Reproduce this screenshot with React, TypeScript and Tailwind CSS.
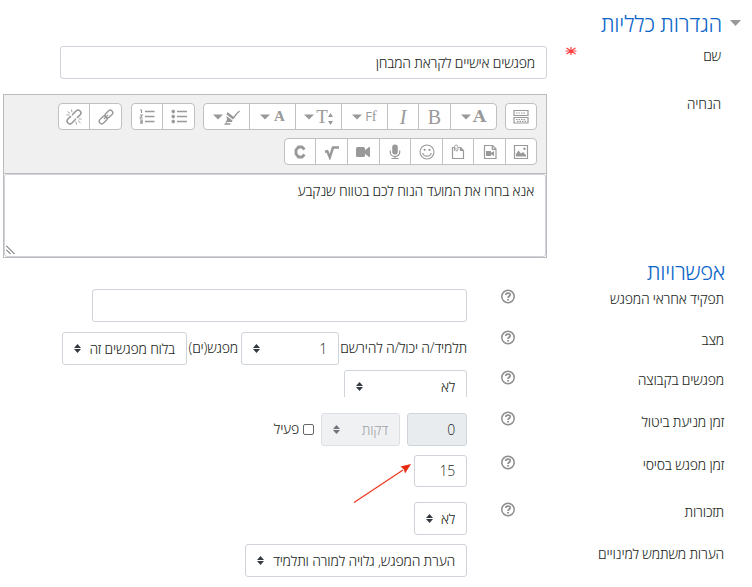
import type { ReactNode } from "react";

const Caret = () => (
  <svg width="10" height="6" viewBox="0 0 10 6" className="shrink-0">
    <path d="M0 0.5h10L5 5.5z" fill="#999" />
  </svg>
);

const Help = () => (
  <svg width="14" height="15" viewBox="0 0 14 15" fill="none" className="shrink-0">
    <circle cx="7" cy="7.5" r="6.200" stroke="#8e8e8e" strokeWidth="1.500" />
    <path d="M4.800 6C4.800 3.300 9.300 3.500 9.200 5.900 9.100 7.300 7.100 7.200 7.100 8.900" stroke="#8e8e8e" strokeWidth="1.700" />
    <path d="M6.200 10h1.800v1.600H6.200z" fill="#8e8e8e" />
  </svg>
);

const Icon = ({ children }: { children: ReactNode }) => (
  <svg width="16" height="16" viewBox="0 0 16 16" fill="none" stroke="#999" strokeWidth="1.2" className="shrink-0">
    {children}
  </svg>
);

const Group = ({ children }: { children: ReactNode }) => (
  <div className="flex h-[27px] overflow-hidden rounded-[4px] border border-[#c0c0c0] bg-white">{children}</div>
);

const Btn = ({ w, last, children }: { w: string; last?: boolean; children: ReactNode }) => (
  <div
    dir="ltr"
    className={`flex items-center justify-center tracking-normal text-[#999] ${w} ${last ? "" : "border-l border-[#c0c0c0]"}`}
  >
    {children}
  </div>
);

const Serif = ({ className, children }: { className: string; children: ReactNode }) => (
  <span className={`font-['Liberation_Serif',serif] leading-none ${className}`}>{children}</span>
);

const Updown = ({ color = "#343a40" }: { color?: string }) => (
  <svg width="7" height="9" viewBox="0 0 7 9" className="shrink-0">
    <path d="M3.5 0L7 3.9H0zM0 5.1h7L3.5 9z" fill={color} />
  </svg>
);

type SelectProps = { className: string; disabled?: boolean; children: ReactNode };

const Select = ({ className, disabled, children }: SelectProps) => (
  <div
    className={`flex h-[33px] shrink-0 items-center justify-between rounded-[3px] border border-[#ced4da] pr-[11px] pl-[11px] ${disabled ? "bg-[#e9ecef] text-[#7a8086] opacity-70" : "bg-white"} ${className}`}
  >
    <span>{children}</span>
    <Updown />
  </div>
);

type RowProps = {
  label: string;
  height: string;
  labelPad: string;
  helpPad?: string;
  children: ReactNode;
};

const Row = ({ label, height, labelPad, helpPad, children }: RowProps) => (
  <div className={`flex items-start pr-[28px] ${height}`}>
    <div className={`w-[209px] shrink-0 leading-[20px] ${labelPad}`}>{label}</div>
    <div className={`flex w-[48px] shrink-0 ${helpPad ?? ""}`}>{helpPad !== undefined && <Help />}</div>
    <div className="flex min-w-0 flex-1 items-start">{children}</div>
  </div>
);

const Toolbar = () => (
  <div className="flex h-[78px] flex-col gap-[8px] bg-[#f0f0f0] pt-[8px] pr-[9px]">
    <div className="flex">
      <Group>
        <Btn w="w-[30px]" last>
          <Icon>
            <path d="M1 1.500h14v5H1zM1 8.500h14v5.500H1z" />
            <path d="M3 4h10M3 10.500h10M4 12.300h9" strokeDasharray="1.500 1" />
          </Icon>
        </Btn>
      </Group>
      <div className="w-[8px]" />
      <Group>
        <Btn w="w-[46px]">
          <Caret />
          <span className="ml-[2px] font-['DejaVu_Serif',serif] text-[17px] leading-none font-bold">A</span>
        </Btn>
        <Btn w="w-[32px]">
          <Serif className="text-[20px]">B</Serif>
        </Btn>
        <Btn w="w-[31px]">
          <Serif className="text-[20px] italic">I</Serif>
        </Btn>
        <Btn w="w-[46px]">
          <Caret />
          <span className="ml-[3px] font-['Open_Sans',sans-serif] text-[13px] leading-none font-normal">F</span>
          <Serif className="text-[15px]">f</Serif>
        </Btn>
        <Btn w="w-[46px]">
          <Caret />
          <Serif className="ml-[2px] text-[19px]">T</Serif>
          <svg width="5" height="13" viewBox="0 0 5 13" className="mt-[3px]">
            <path d="M2.500 1L5 5H0zM2.500 13L5 9H0z" fill="#999" />
          </svg>
        </Btn>
        <Btn w="w-[46px]">
          <Caret />
          <Serif className="ml-[4px] text-[15px] font-bold">A</Serif>
        </Btn>
        <Btn w="w-[45px]" last>
          <Caret />
          <svg width="17" height="16" viewBox="0 0 17 16" className="ml-[1px]">
            <path d="M3.500 3L2.500 5.500 9 10.500l1.500-2zM2.500 7l6 4.500-.5 1.500H1.500L3 11z" fill="#999" />
            <path d="M9.500 9L12 5.500 15.500 2M3 13.500L1.500 15h5" stroke="#999" strokeWidth="1.300" fill="none" />
          </svg>
        </Btn>
      </Group>
      <div className="w-[8px]" />
      <Group>
        <Btn w="w-[32px]">
          <Icon>
            <path d="M6 2.500h10M6 7.500h10M6 12.500h10" strokeWidth="1.400" />
            <path d="M.5 2.500H4M.5 7.500H4M.5 12.500H4M2.250 .8v3.400M2.250 5.800v3.400M2.250 10.800v3.400" strokeWidth="2" />
          </Icon>
        </Btn>
        <Btn w="w-[30px]" last>
          <Icon>
            <path d="M6 2.500h9.500M6 7.500h9.500M6 12.500h9.500" strokeWidth="1.300" />
            <path d="M1 1h1.500v3M1 6h2.200L1.200 9h2.500M1 11h2.200v3.200H1M1.200 12.600h2" />
          </Icon>
        </Btn>
      </Group>
      <div className="w-[9px]" />
      <Group>
        <Btn w="w-[32px]">
          <Icon>
            <g transform="rotate(-45 8 8)" strokeWidth="1.400">
              <rect x="-0.500" y="5.500" width="9" height="5" rx="2.500" />
              <rect x="7.500" y="5.500" width="9" height="5" rx="2.500" />
              <path d="M5 8h6" />
            </g>
          </Icon>
        </Btn>
        <Btn w="w-[30px]" last>
          <Icon>
            <g transform="rotate(-45 8 8)" strokeWidth="1.600">
              <path d="M6.500 5.200H2.300a2.800 2.800 0 000 5.600h4.200q1 0 1.300-.8M8.200 6q.3-.8 1.300-.8h4.200a2.800 2.800 0 010 5.600H9.500" />
            </g>
            <path d="M.5 6h2.800M1.500 2.500l2.500 2M5.500 .5l.5 2.800M15.500 10h-2.800M14.500 13.800l-2.500-2.200M10.500 15.500l-.5-2.800" strokeWidth="0.900" />
          </Icon>
        </Btn>
      </Group>
    </div>
    <div className="flex">
      <Group>
        <Btn w="w-[31px]">
          <Icon>
            <path d="M1.500 1.500h13v13h-13z" />
            <path d="M3 12.500V10l2.500-3.500 2.500 3L10 8l3 3v1.500z" fill="#999" stroke="none" />
            <circle cx="11.500" cy="4.800" r="1.200" fill="#999" stroke="none" />
          </Icon>
        </Btn>
        <Btn w="w-[32px]">
          <Icon>
            <path d="M2.500 1.500h8l3.500 3.500v9.500h-11.500zM10.300 1.500v3.800H14" />
            <path d="M4 7h5v1.800l3-1.800v5l-3-1.800V12H4z" fill="#999" stroke="none" />
          </Icon>
        </Btn>
        <Btn w="w-[31px]">
          <Icon>
            <path d="M4 3.500H2.500v11h11V6.500L10.500 3.500H8.500M10.500 3.500v3h3" />
            <path d="M4.500 7V2.800a1.700 1.700 0 013.400 0V6a1 1 0 01-2 0V3.500" strokeWidth="0.900" />
          </Icon>
        </Btn>
        <Btn w="w-[32px]">
          <Icon>
            <circle cx="8" cy="8" r="7" strokeWidth="1.100" />
            <path d="M3.800 9c.7 4.200 7.700 4.200 8.400 0" />
            <circle cx="5.600" cy="5.800" r="1.100" fill="#999" stroke="none" />
            <circle cx="10.400" cy="5.800" r="1.100" fill="#999" stroke="none" />
          </Icon>
        </Btn>
        <Btn w="w-[31px]">
          <Icon>
            <rect x="5.200" y="0.500" width="5.600" height="10" rx="2.800" fill="#999" stroke="none" />
            <path d="M3.300 6.500v2a4.700 4 0 009.400 0v-2M8 12.500v2M4.500 14.500h7" />
          </Icon>
        </Btn>
        <Btn w="w-[32px]">
          <svg width="16" height="16" viewBox="0 0 16 16" className="mr-[2px]">
            <path d="M1 4.500Q1 3 2.500 3h6Q10 3 10 4.500v1.700L14 3h1v10h-1l-4-3.200v1.700Q10 13 8.500 13h-6Q1 13 1 11.500z" fill="#999" />
          </svg>
        </Btn>
        <Btn w="w-[32px]">
          <Icon>
            <path d="M1 7.800l2.300-.5 2.500 6L9 3.500h6" strokeWidth="2.500" />
          </Icon>
        </Btn>
        <Btn w="w-[30px]" last>
          <Icon>
            <path d="M12.500 5.500L10 3H6.500L4 6v4l2.500 3H10l2.500-2.500" strokeWidth="2.800" />
          </Icon>
        </Btn>
      </Group>
    </div>
  </div>
);

export default function App() {
  return (
    <div
      dir="rtl"
      className="relative h-[587px] w-[752px] overflow-hidden bg-white font-['Open_Sans','DejaVu_Sans',sans-serif] text-[14px] leading-[20px] font-light tracking-[-0.2px] whitespace-nowrap text-[#1c1f22]"
    >
      <div className="flex h-[46px] items-start pt-[8px] pr-[11px]">
        <svg width="11" height="6" viewBox="0 0 11 6" className="mt-[12px] ml-[8px]">
          <path d="M0 0h11L5.500 6z" fill="#999" />
        </svg>
        <h2 className="text-[22px] leading-[30px] font-light tracking-[-0.15px] text-[#0b66c8]">הגדרות כלליות</h2>
      </div>
      <div className="flex h-[48px] items-start pr-[31px]">
        <div className="w-[144px]">שם</div>
        <div className="w-[30px]">
          <svg width="12" height="10" viewBox="0 0 12 10">
            <path d="M6 1v8M.5 5h11M1.500 2l9 6M10.500 2l-9 6" stroke="#ff2020" strokeWidth="1.200" opacity="0.850" />
          </svg>
        </div>
        <div className="flex h-[33px] w-[487px] items-center rounded-[3px] border border-[#ced4da] pr-[11px]">
          מפגשים אישיים לקראת המבחן
        </div>
      </div>
      <div className="flex h-[164px] items-start pr-[31px]">
        <div className="w-[174px]">הנחיה</div>
        <div className="h-[164px] w-[544px] border border-[#bbb]">
          <Toolbar />
          <div className="relative h-[84px] border-t border-[#bbb]">
            <div className="h-[83px] rounded-[3px] border border-[#ced4da] pt-[6px] pr-[11px]">
              אנא בחרו את המועד הנוח לכם בטווח שנקבע
            </div>
            <svg width="9" height="9" viewBox="0 0 9 9" className="absolute bottom-[3px] left-[2px]">
              <path d="M0 .5L8.500 9M0 4.500L4.500 9" stroke="#444" fill="none" />
            </svg>
          </div>
        </div>
      </div>
      <h2 className="h-[31px] pr-[27px] text-[22px] leading-[26px] font-light tracking-[-0.3px] text-[#0b66c8]">אפשרויות</h2>
      <Row label="תפקיד אחראי המפגש" height="h-[43px]" labelPad="pt-0" helpPad="pt-0">
        <div className="h-[33px] w-[375px] rounded-[3px] border border-[#ced4da]" />
      </Row>
      <Row label="מצב" height="h-[38px]" labelPad="-mt-[2px]" helpPad="-mt-[2px]">
        <span className="w-[128px] shrink-0 leading-[32px]">תלמיד/ה יכול/ה להירשם</span>
        <Select className="w-[98px]">1</Select>
        <span className="w-[54px] shrink-0 pr-[3px] leading-[32px]">מפגש(ים)</span>
        <Select className="w-[125px]">בלוח מפגשים זה</Select>
      </Row>
      <Row label="מפגשים בקבוצה" height="h-[43px]" labelPad="pt-0" helpPad="pt-0">
        <div className="h-[27px] overflow-hidden">
          <Select className="w-[123px]">לא</Select>
        </div>
      </Row>
      <Row label="זמן מניעת ביטול" height="h-[42px]" labelPad="-mt-[1px]" helpPad="-mt-[2px]">
        <div className="flex h-[33px] w-[60px] items-center rounded-[3px] border border-[#ced4da] bg-[#e9ecef] pr-[11px]">
          0
        </div>
        <Select disabled className="mr-[7px] w-[79px]">
          דקות
        </Select>
        <div className="mt-[11px] mr-[7px] h-[11px] w-[11px] rounded-[2px] border border-[#666]" />
        <span className="mr-[4px] leading-[32px]">פעיל</span>
      </Row>
      <Row label="זמן מפגש בסיסי" height="h-[47px]" labelPad="pt-0" helpPad="pt-0">
        <div className="flex h-[32px] w-[53px] items-center rounded-[3px] border border-[#ced4da] pr-[11px]">15</div>
      </Row>
      <Row label="תזכורות" height="h-[42px]" labelPad="pt-0" helpPad="pt-0">
        <Select className="w-[53px]">לא</Select>
      </Row>
      <Row label="הערות משתמש למינויים" height="h-[43px]" labelPad="pt-0">
        <Select className="w-[222px]">הערת המפגש, גלויה למורה ותלמיד</Select>
      </Row>
      <svg width="60" height="42" viewBox="0 0 60 42" className="absolute top-[462px] left-[353px]">
        <path d="M1 40.500L50 8" stroke="#ee3a20" strokeWidth="1.300" />
        <path d="M58 2L47.500 4.500 51 7.500 52 11.500z" fill="#e82a10" />
      </svg>
    </div>
  );
}
